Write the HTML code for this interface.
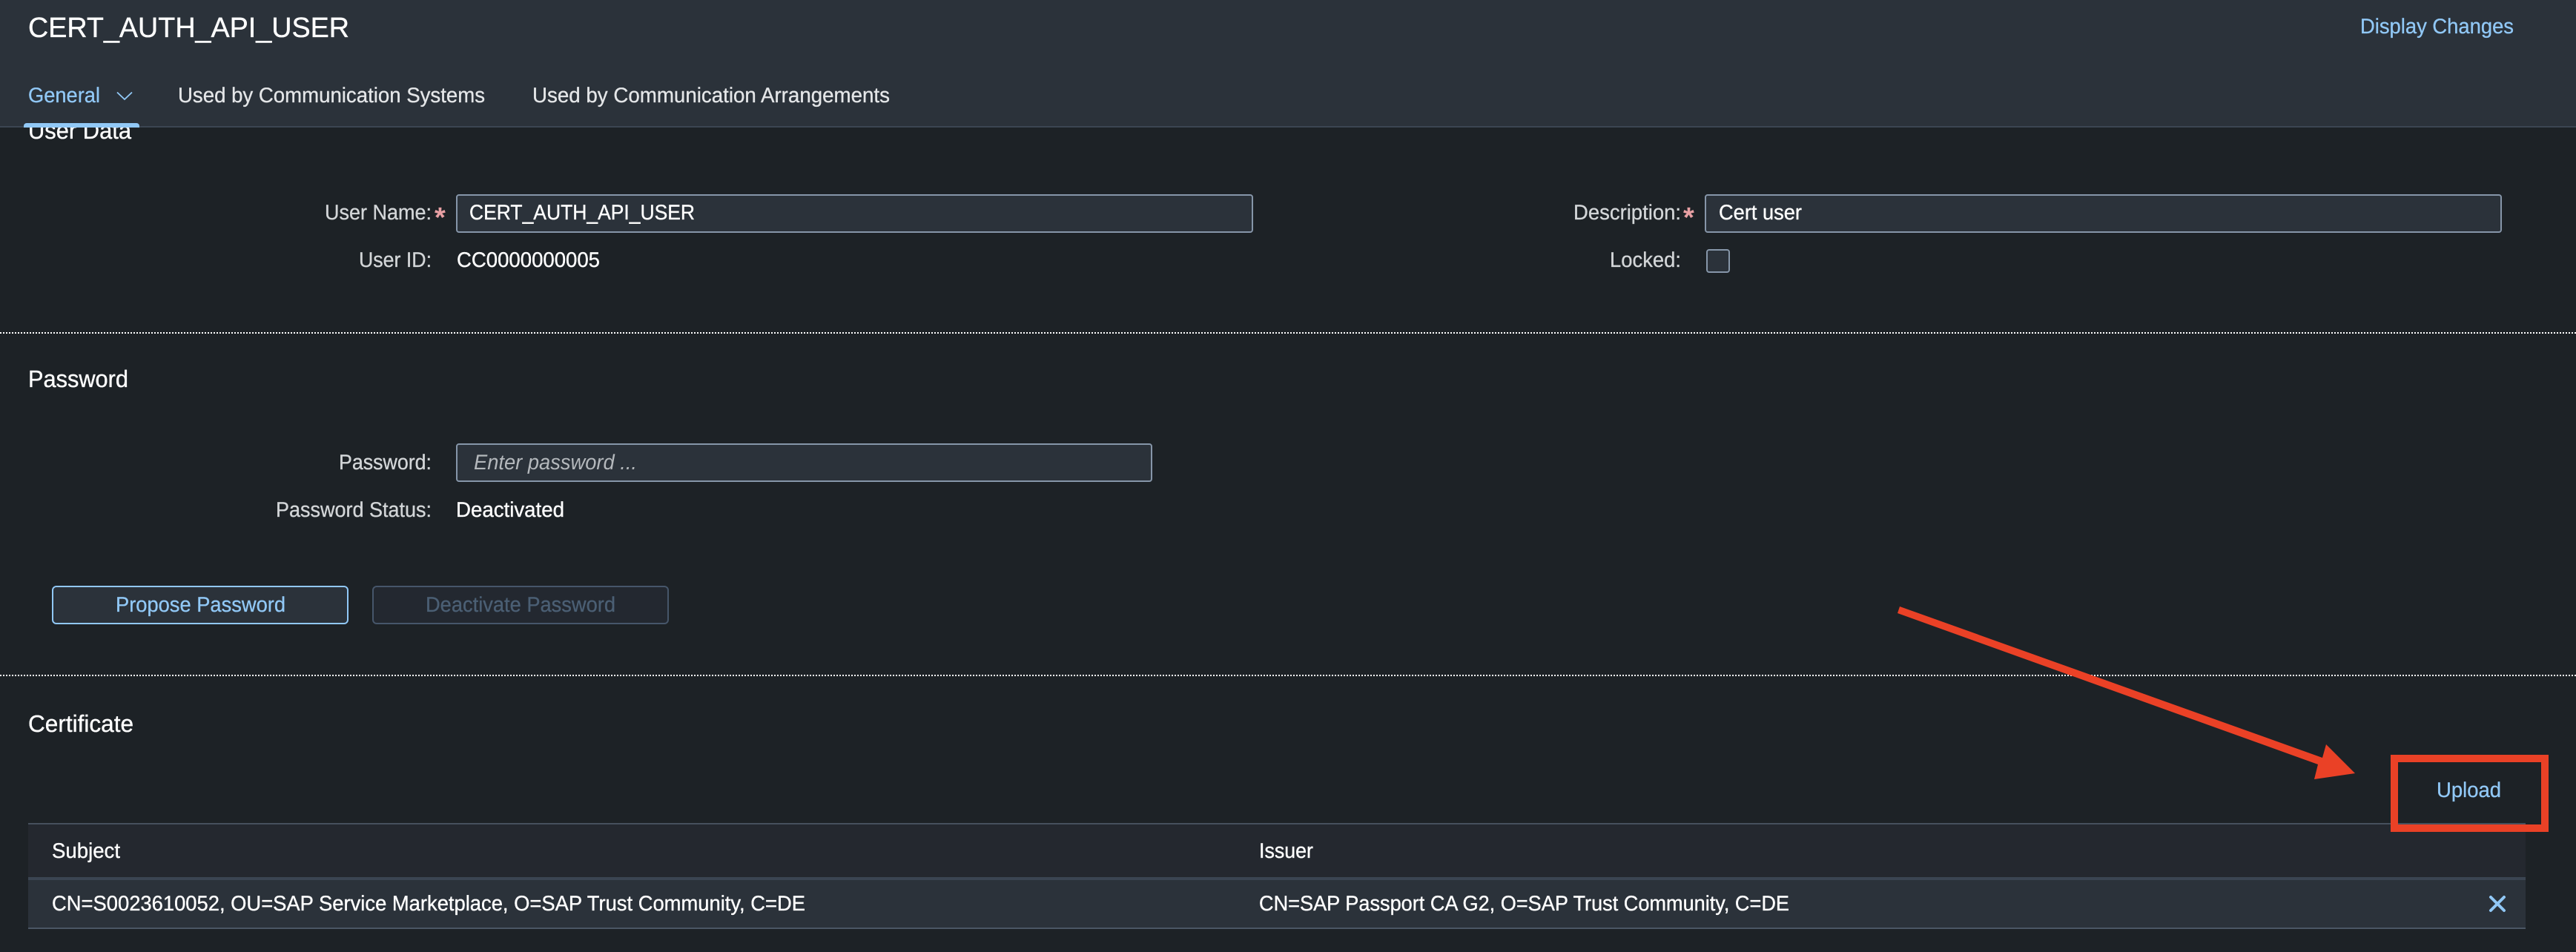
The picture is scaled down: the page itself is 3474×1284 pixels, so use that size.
<!DOCTYPE html>
<html lang="en">
<head>
<meta charset="utf-8">
<title>CERT_AUTH_API_USER</title>
<style>
html,body{margin:0;padding:0;background:#1d2226;width:3474px;height:1284px;overflow:hidden}
svg{display:block}
text{font-family:"Liberation Sans",sans-serif;text-rendering:geometricPrecision}
.l{font-size:28.5px;fill:#d3d6d8;stroke:#d3d6d8;stroke-width:.3px}
.v{font-size:28.5px;fill:#fff;stroke:#fff;stroke-width:.35px}
.h{font-size:32px;fill:#fff;stroke:#fff;stroke-width:.35px}
.b{font-size:28.5px;fill:#91c8f6;stroke:#91c8f6;stroke-width:.3px}
.t{font-size:28.5px;fill:#e4e6e8;stroke:#e4e6e8;stroke-width:.3px}
.req{font-size:38px;font-weight:bold;fill:#e8a0a4}
</style>
</head>
<body>
<svg xmlns="http://www.w3.org/2000/svg" width="3474" height="1284" viewBox="0 0 3474 1284">
<rect width="3474" height="1284" fill="#1d2226"/>

<!-- clipped section heading under the header -->
<text class="h" x="38" y="187" textLength="139" lengthAdjust="spacingAndGlyphs">User Data</text>

<!-- header -->
<rect x="0" y="0" width="3474" height="170" fill="#2b323a"/>
<rect x="0" y="170" width="3474" height="2" fill="#3b4552"/>
<text x="38" y="50" font-size="38" fill="#fff" stroke="#fff" stroke-width=".35" textLength="433" lengthAdjust="spacingAndGlyphs">CERT_AUTH_API_USER</text>
<text class="b" x="3183" y="45" textLength="207" lengthAdjust="spacingAndGlyphs">Display Changes</text>

<text class="b" x="38" y="138" textLength="97" lengthAdjust="spacingAndGlyphs">General</text>
<path d="M158 124.500 L168 134 L178 124.500" fill="none" stroke="#91c8f6" stroke-width="1.800"/>
<text class="t" x="240" y="138" textLength="414" lengthAdjust="spacingAndGlyphs">Used by Communication Systems</text>
<text class="t" x="718" y="138" textLength="482" lengthAdjust="spacingAndGlyphs">Used by Communication Arrangements</text>
<path d="M32 172 V170 a4 4 0 0 1 4 -4 H184 a4 4 0 0 1 4 4 V172 Z" fill="#91c8f6"/>

<!-- user data -->
<text class="l" x="438" y="296" textLength="144" lengthAdjust="spacingAndGlyphs">User Name:</text>
<text class="req" x="586" y="306">*</text>
<rect x="616" y="263" width="1073" height="50" rx="3" fill="#2b323a" stroke="#8696a9" stroke-width="2"/>
<text class="v" x="633" y="296" textLength="304" lengthAdjust="spacingAndGlyphs">CERT_AUTH_API_USER</text>
<text class="l" x="484" y="360" textLength="98" lengthAdjust="spacingAndGlyphs">User ID:</text>
<text class="v" x="616" y="360" textLength="193" lengthAdjust="spacingAndGlyphs">CC0000000005</text>

<text class="l" x="2122" y="296" textLength="145" lengthAdjust="spacingAndGlyphs">Description:</text>
<text class="req" x="2270" y="306">*</text>
<rect x="2300" y="263" width="1073" height="50" rx="3" fill="#2b323a" stroke="#8696a9" stroke-width="2"/>
<text class="v" x="2318" y="296" textLength="112" lengthAdjust="spacingAndGlyphs">Cert user</text>
<text class="l" x="2171" y="360" textLength="96" lengthAdjust="spacingAndGlyphs">Locked:</text>
<rect x="2302" y="337" width="30" height="30" rx="3" fill="#2b323a" stroke="#8696a9" stroke-width="2"/>

<line x1="0" y1="449" x2="3474" y2="449" stroke="#fff" stroke-width="2" stroke-dasharray="2 2"/>

<!-- password -->
<text class="h" x="38" y="522" textLength="135" lengthAdjust="spacingAndGlyphs">Password</text>
<text class="l" x="457" y="633" textLength="125" lengthAdjust="spacingAndGlyphs">Password:</text>
<rect x="616" y="599" width="937" height="50" rx="3" fill="#2b323a" stroke="#8696a9" stroke-width="2"/>
<text x="639" y="633" font-size="28.500" font-style="italic" fill="#b4b8bc" textLength="220" lengthAdjust="spacingAndGlyphs">Enter password ...</text>
<text class="l" x="372" y="697" textLength="210" lengthAdjust="spacingAndGlyphs">Password Status:</text>
<text class="v" x="615" y="697" textLength="146" lengthAdjust="spacingAndGlyphs">Deactivated</text>

<rect x="71" y="791" width="398" height="50" rx="5" fill="#2b323a" stroke="#91c8f6" stroke-width="2"/>
<text class="b" x="156" y="825" textLength="229" lengthAdjust="spacingAndGlyphs">Propose Password</text>
<rect x="503" y="791" width="398" height="50" rx="5" fill="#232830" stroke="#46566a" stroke-width="2"/>
<text x="574" y="825" font-size="28.500" fill="#4b5f74" stroke="#4b5f74" stroke-width=".3" textLength="256" lengthAdjust="spacingAndGlyphs">Deactivate Password</text>

<line x1="0" y1="911" x2="3474" y2="911" stroke="#fff" stroke-width="2" stroke-dasharray="2 2"/>

<!-- certificate -->
<text class="h" x="38" y="987" textLength="142" lengthAdjust="spacingAndGlyphs">Certificate</text>
<text class="b" x="3286" y="1075" textLength="87" lengthAdjust="spacingAndGlyphs">Upload</text>

<rect x="38" y="1110" width="3368" height="2" fill="#46505d"/>
<rect x="38" y="1112" width="3368" height="71" fill="#24282f"/>
<rect x="38" y="1183" width="3368" height="4" fill="#3b4552"/>
<rect x="38" y="1187" width="3368" height="64" fill="#2b323a"/>
<rect x="38" y="1251" width="3368" height="2" fill="#4b5664"/>

<text class="v" x="70" y="1157" textLength="92" lengthAdjust="spacingAndGlyphs">Subject</text>
<text class="v" x="1698" y="1157" textLength="73" lengthAdjust="spacingAndGlyphs">Issuer</text>
<text class="v" x="70" y="1228" textLength="1016" lengthAdjust="spacingAndGlyphs">CN=S0023610052, OU=SAP Service Marketplace, O=SAP Trust Community, C=DE</text>
<text class="v" x="1698" y="1228" textLength="715" lengthAdjust="spacingAndGlyphs">CN=SAP Passport CA G2, O=SAP Trust Community, C=DE</text>
<path d="M3359 1210 L3377 1228 M3377 1210 L3359 1228" fill="none" stroke="#91c8f6" stroke-width="4" stroke-linecap="round"/>

<!-- annotation -->
<path d="M3229 1023 H3432 V1117 H3229 Z" fill="none" stroke="#ea4126" stroke-width="10"/>
<polygon points="2562,818 3132,1022 3137,1004 3176,1043 3121,1051 3126,1031 2559,827" fill="#ea4126"/>
</svg>
</body>
</html>
